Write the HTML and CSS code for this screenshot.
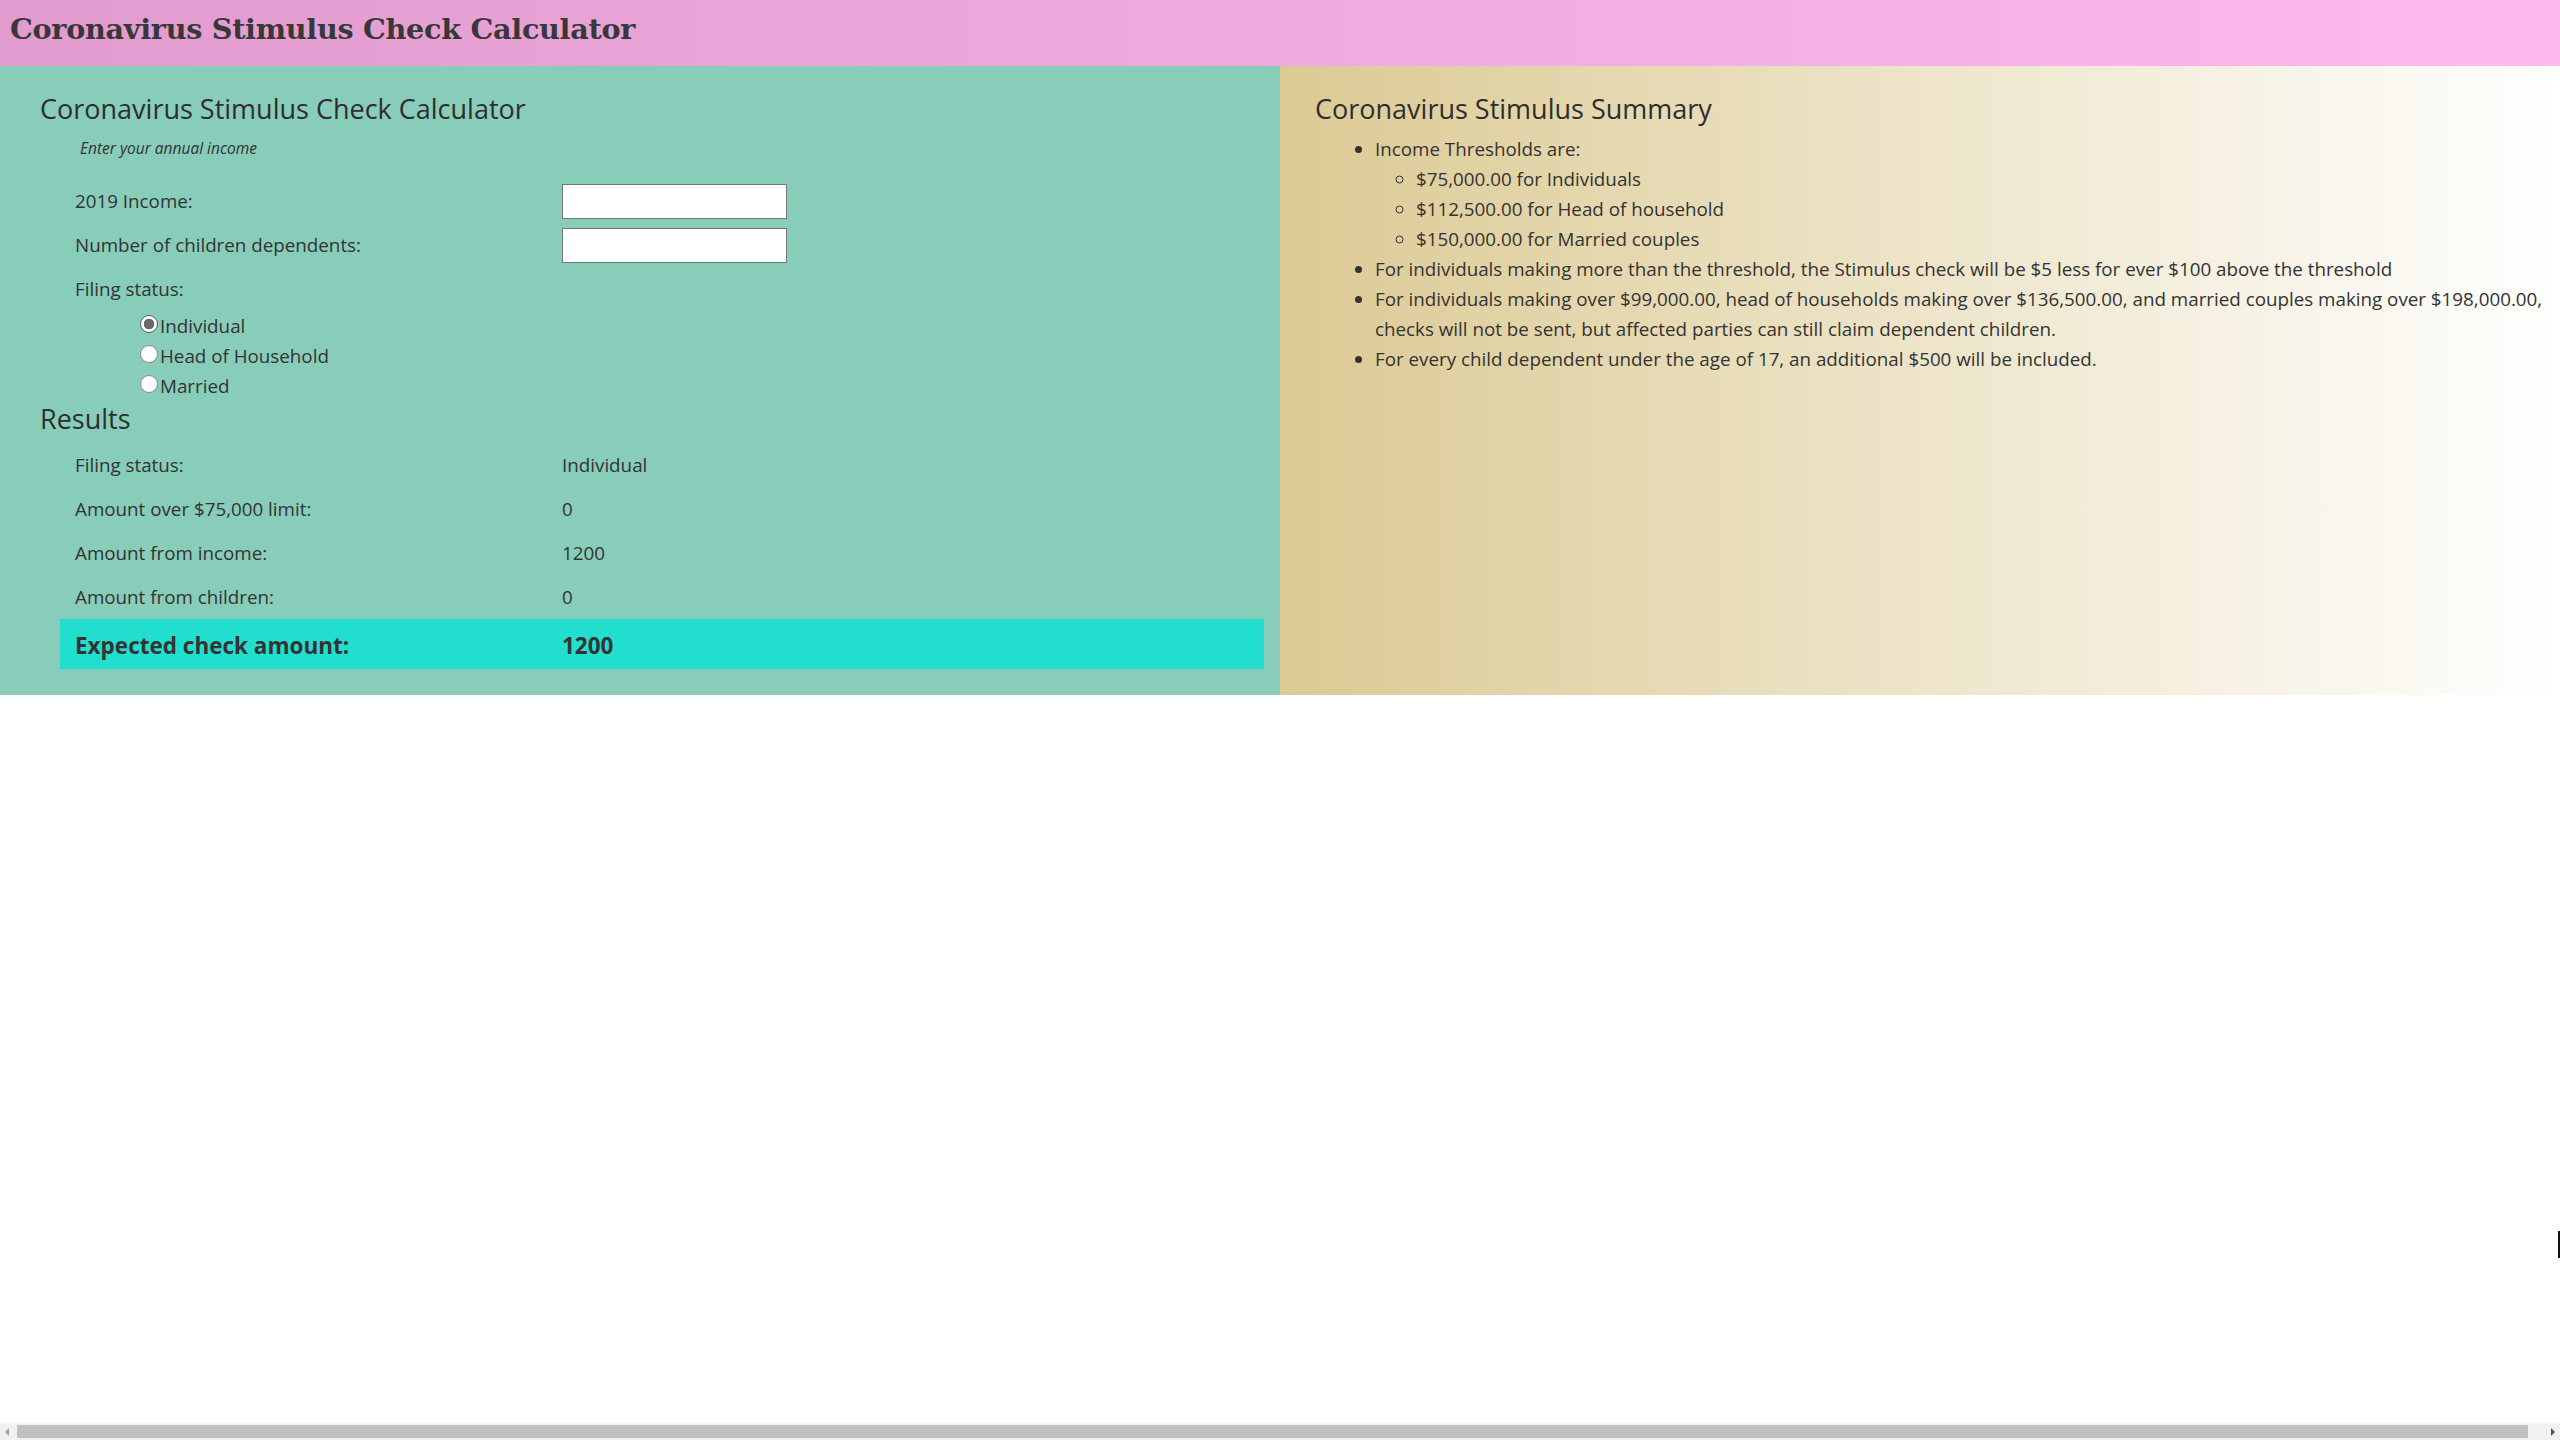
FILE: index.html
```html
<!DOCTYPE html>
<html lang="en">
<head>
<meta charset="utf-8">
<title>Coronavirus Stimulus Check Calculator</title>
<link rel="stylesheet" href="styles.css">
</head>
<body>
<header class="topbar">
  <h1 class="site-title">Coronavirus Stimulus Check Calculator</h1>
</header>
<main class="columns">
  <section class="calc">
    <h2 class="panel-title">Coronavirus Stimulus Check Calculator</h2>
    <p class="hint">Enter your annual income</p>
    <div class="form-grid">
      <label class="cell-label" for="income">2019 Income:</label>
      <div class="cell-value"><input class="text-input" id="income" type="text"></div>
      <label class="cell-label" for="kids">Number of children dependents:</label>
      <div class="cell-value"><input class="text-input" id="kids" type="text"></div>
      <div class="cell-label">Filing status:</div>
      <div class="cell-value"></div>
    </div>
    <div class="radios">
      <label class="radio-row"><input class="radio" type="radio" name="status" checked>Individual</label>
      <label class="radio-row"><input class="radio" type="radio" name="status">Head of Household</label>
      <label class="radio-row"><input class="radio" type="radio" name="status">Married</label>
    </div>
    <h2 class="results-title">Results</h2>
    <div class="results-grid">
      <div class="cell-label">Filing status:</div>
      <div class="cell-value">Individual</div>
      <div class="cell-label">Amount over $75,000 limit:</div>
      <div class="cell-value">0</div>
      <div class="cell-label">Amount from income:</div>
      <div class="cell-value">1200</div>
      <div class="cell-label">Amount from children:</div>
      <div class="cell-value">0</div>
    </div>
    <div class="total-bar">
      <div class="cell-label">Expected check amount:</div>
      <div class="cell-value">1200</div>
    </div>
  </section>
  <section class="summary">
    <h2 class="panel-title">Coronavirus Stimulus Summary</h2>
    <ul class="summary-list">
      <li>Income Thresholds are:
        <ul class="sub-list">
          <li>$75,000.00 for Individuals</li>
          <li>$112,500.00 for Head of household</li>
          <li>$150,000.00 for Married couples</li>
        </ul>
      </li>
      <li>For individuals making more than the threshold, the Stimulus check will be $5 less for ever $100 above the threshold</li>
      <li>For individuals making over $99,000.00, head of households making over $136,500.00, and married couples making over $198,000.00,<br>checks will not be sent, but affected parties can still claim dependent children.</li>
      <li>For every child dependent under the age of 17, an additional $500 will be included.</li>
    </ul>
  </section>
</main>
<div class="caret"></div>
<div class="hscroll">
  <span class="arrow arrow-left"></span>
  <span class="thumb"></span>
  <span class="arrow arrow-right"></span>
</div>
</body>
</html>
```

FILE: styles.css
```css
html, body {
  margin: 0;
  padding: 0;
}
body {
  background: #ffffff;
  color: #333333;
  font-family: "Open Sans", "Noto Sans", sans-serif;
  font-size: 18.8px;
  height: 1440px;
  overflow: hidden;
}

.topbar {
  height: 66px;
  box-sizing: border-box;
  background: linear-gradient(to right, #e19bcf, #fdbaed);
  display: flex;
  align-items: center;
  padding: 0 0 8px 10px;
}
.site-title {
  margin: 0;
  font-family: "DejaVu Serif", "Liberation Serif", serif;
  font-weight: bold;
  font-size: 28.7px;
  color: #383838;
  letter-spacing: -0.3px;
  line-height: 1;
}

.columns {
  display: flex;
}
.calc {
  width: 1280px;
  box-sizing: border-box;
  background: #88cdba;
  padding: 25px 16px 26px 40px;
}
.summary {
  width: 1280px;
  box-sizing: border-box;
  background: linear-gradient(to right, #dcca94, #ffffff);
  padding: 25px 0 0 35px;
}

.panel-title, .results-title {
  margin: 0;
  font-size: 27px;
  font-weight: normal;
  line-height: 36px;
  color: #2e2e2e;
}

.hint {
  margin: 11px 0 0 40px;
  font-size: 15.5px;
  line-height: 20px;
  font-style: italic;
}

.form-grid, .results-grid, .total-bar {
  display: grid;
  grid-template-columns: 487px 1fr;
  margin-left: 20px;
}
.form-grid {
  margin-top: 21px;
  grid-auto-rows: 44px;
}
.results-grid {
  margin-top: 6px;
  grid-auto-rows: 44px;
}
.cell-label, .cell-value {
  display: flex;
  align-items: center;
  padding-left: 15px;
}
.text-input {
  width: 225px;
  height: 35px;
  box-sizing: border-box;
  border: 1px solid #767676;
  background: #fff;
  margin: 0;
  padding: 0 4px;
}

.radios {
  padding-left: 100px;
}
.radio-row {
  display: flex;
  align-items: center;
  height: 30px;
}
.radio {
  appearance: none;
  width: 18px;
  height: 18px;
  margin: 0 2px 0 0;
  border-radius: 50%;
  border: 1px solid #8a8a8a;
  background: #ffffff;
  box-sizing: border-box;
  position: relative;
  top: -2px;
}
.radio:checked {
  border-color: #5d5d5d;
  background: radial-gradient(circle, #6a6a6a 0 5px, #ffffff 5.6px);
}

.total-bar {
  background: #21dece;
  height: 50px;
  font-weight: bold;
  font-size: 22.5px;
}
.total-bar .cell-label, .total-bar .cell-value {
  padding-top: 3px;
}

.summary-list {
  margin: 7px 0 0 0;
  padding-left: 60px;
  line-height: 30px;
}
.sub-list {
  margin: 0;
  padding-left: 41px;
  list-style-type: circle;
}

.caret {
  position: absolute;
  left: 2558px;
  top: 1231px;
  width: 2px;
  height: 27px;
  background: #111;
}
.hscroll {
  position: fixed;
  left: 0;
  right: 0;
  bottom: 0;
  height: 17px;
  background: #f1f1f1;
}
.thumb {
  position: absolute;
  left: 17px;
  right: 32px;
  top: 2px;
  height: 13px;
  background: #c1c1c1;
}
.arrow {
  position: absolute;
  top: 5px;
  width: 0;
  height: 0;
  border-top: 4px solid transparent;
  border-bottom: 4px solid transparent;
}
.arrow-left {
  left: 5px;
  border-right: 4px solid #a3a3a3;
}
.arrow-right {
  right: 5px;
  border-left: 4px solid #505050;
}
```
